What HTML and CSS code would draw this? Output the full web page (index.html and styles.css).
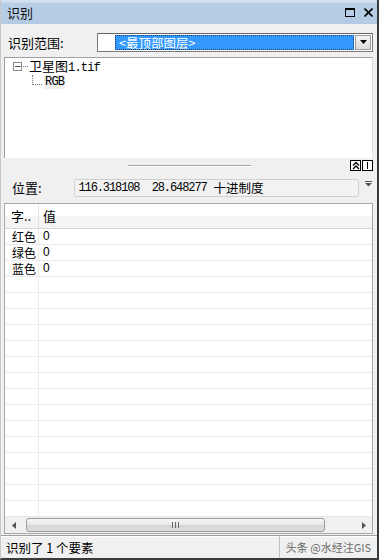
FILE: index.html
```html
<!DOCTYPE html>
<html lang="zh">
<head>
<meta charset="utf-8">
<link rel="stylesheet" href="styles.css">
</head>
<body>
<div class="window">
  <div class="titlebar">
    <span class="title">识别</span>
    <div class="title-icons">
      <span class="ico-max"></span>
      <svg class="ico-close" width="9" height="9" viewBox="0 0 9 9"><path d="M0.5 0.5L8.5 8.5M8.5 0.5L0.5 8.5" stroke="#000" stroke-width="1.6"/></svg>
    </div>
  </div>

  <div class="scope-row">
    <span class="scope-label">识别范围:</span>
    <div class="combo">
      <span class="combo-blank"></span>
      <span class="combo-sel">&lt;最顶部图层&gt;</span>
      <span class="combo-btn"><svg width="7" height="4" viewBox="0 0 7 4"><path d="M0 0H7L3.5 4Z" fill="#000"/></svg></span>
    </div>
  </div>

  <div class="tree">
    <div class="tree-node">
      <span class="expander">−</span><span class="dots-h"></span><span class="node-text">卫星图<span class="mono">1.tif</span></span>
    </div>
    <div class="tree-child">
      <span class="elbow"></span><span class="child-text mono">RGB</span>
    </div>
  </div>

  <div class="splitter">
    <span class="split-line"></span>
    <div class="split-btns">
      <span class="sbtn"><svg width="8" height="9" viewBox="0 0 8 9"><path d="M1 4.5L4 1.5L7 4.5M1 8L4 5L7 8" fill="none" stroke="#000" stroke-width="1.3"/></svg></span>
      <span class="sbtn"><span class="vbar"></span></span>
    </div>
  </div>

  <div class="pos-row">
    <span class="pos-label">位置:</span>
    <div class="pos-field"><span class="mono num">116.318108&nbsp;&nbsp;28.648277</span><span class="unit">十进制度</span></div>
    <span class="pos-drop"><svg width="7" height="6" viewBox="0 0 7 6"><path d="M0 0.5H7" stroke="#555" stroke-width="1"/><path d="M0 2H7L3.5 5.5Z" fill="#555"/></svg></span>
  </div>

  <div class="grid">
    <div class="grid-body">
      <div class="grow ghead"><span class="c1">字..</span><span class="c2">值</span></div>
      <div class="grow"><span class="c1">红色</span><span class="c2">0</span></div>
      <div class="grow"><span class="c1">绿色</span><span class="c2">0</span></div>
      <div class="grow"><span class="c1">蓝色</span><span class="c2">0</span></div>
      <div class="grow"><span class="c1"></span><span class="c2"></span></div>
      <div class="grow"><span class="c1"></span><span class="c2"></span></div>
      <div class="grow"><span class="c1"></span><span class="c2"></span></div>
      <div class="grow"><span class="c1"></span><span class="c2"></span></div>
      <div class="grow"><span class="c1"></span><span class="c2"></span></div>
      <div class="grow"><span class="c1"></span><span class="c2"></span></div>
      <div class="grow"><span class="c1"></span><span class="c2"></span></div>
      <div class="grow"><span class="c1"></span><span class="c2"></span></div>
      <div class="grow"><span class="c1"></span><span class="c2"></span></div>
      <div class="grow"><span class="c1"></span><span class="c2"></span></div>
      <div class="grow"><span class="c1"></span><span class="c2"></span></div>
      <div class="grow"><span class="c1"></span><span class="c2"></span></div>
      <div class="grow"><span class="c1"></span><span class="c2"></span></div>
      <div class="grow"><span class="c1"></span><span class="c2"></span></div>
      <div class="grow"><span class="c1"></span><span class="c2"></span></div>
      <div class="grow"><span class="c1"></span><span class="c2"></span></div>
    </div>
    <div class="hscroll">
      <span class="arrow"><svg width="4" height="7" viewBox="0 0 4 7"><path d="M4 0V7L0 3.5Z" fill="#555"/></svg></span>
      <div class="track">
        <div class="thumb"><span class="grip"></span></div>
      </div>
      <span class="arrow"><svg width="4" height="7" viewBox="0 0 4 7"><path d="M0 0V7L4 3.5Z" fill="#555"/></svg></span>
    </div>
  </div>

  <div class="status">
    <span class="status-text">识别了 1 个要素</span>
    <span class="status-mark">头条 @水经注GIS</span>
  </div>
</div>
</body>
</html>
```
FILE: styles.css
```css
* { box-sizing: border-box; }
html, body { margin: 0; padding: 0; }
body {
  width: 379px;
  height: 560px;
  overflow: hidden;
  background: #fff;
  font-family: "Noto Sans CJK SC", "Noto Sans", sans-serif;
  font-size: 12px;
  color: #000;
}
.window {
  width: 379px;
  height: 560px;
  background: #f0f0f0;
  border-right: 2px solid #3a3a3a;
  border-bottom: 2px solid #3a3a3a;
  border-left: 1px solid #c8c8c8;
  display: flex;
  flex-direction: column;
}
.mono { font-family: "Liberation Mono", "DejaVu Sans Mono", monospace; }

.titlebar {
  height: 24px;
  flex: none;
  background: linear-gradient(#d2e1f1 0, #d2e1f1 2px, #b9cfe7 3px, #b4cbe5 100%);
  display: flex;
  align-items: center;
  justify-content: space-between;
  padding: 0 4px 0 6px;
}
.title { font-size: 13px; line-height: 1; color: #101010; }
.title-icons { display: flex; align-items: center; gap: 9px; }
.ico-max { width: 10px; height: 9px; border: 1.5px solid #000; border-top-width: 2px; display: block; }
.ico-close { display: block; }

.scope-row {
  height: 33px;
  flex: none;
  display: flex;
  align-items: center;
  padding: 3px 4px 0 7px;
}
.scope-label { width: 89px; font-size: 13px; }
.combo {
  flex: 1;
  height: 19px;
  display: flex;
  background: #fff;
  border: 1px solid #7a7a7a;
  border-top-color: #646464;
  padding: 1px;
}
.combo-blank { width: 16px; background: #fff; }
.combo-sel {
  flex: 1;
  background: #3399ff;
  color: #fff;
  font-size: 12.5px;
  line-height: 15px;
  padding-left: 4px;
  outline: 1px dotted #1a3a6a;
  outline-offset: -1px;
}
.combo-btn {
  width: 16px;
  background: linear-gradient(#f4f4f4, #dcdcdc);
  border: 1px solid #9a9a9a;
  margin-left: 1px;
  display: flex;
  align-items: center;
  justify-content: center;
}
.combo-btn svg { display: block; }

.tree {
  flex: none;
  height: 101px;
  margin: 0 4px 0 3px;
  background: #fff;
  border: 1px solid #a0a0a0;
  border-right-color: #e0e0e0;
  border-bottom: none;
  padding: 1px 0 0 8px;
}
.tree-node { display: flex; align-items: center; height: 15px; }
.expander {
  width: 9px; height: 9px;
  border: 1px solid #8a8a8a;
  font-size: 9px; line-height: 6px;
  text-align: center;
  color: #222;
  font-family: "DejaVu Sans", sans-serif;
  display: block;
}
.dots-h { width: 5px; border-top: 1px dotted #808080; margin: 0 1px; }
.node-text { font-size: 13px; line-height: 15px; }
.node-text .mono { font-size: 12px; letter-spacing: -0.8px; }
.tree-child { display: flex; align-items: flex-end; height: 15px; padding-left: 19px; }
.elbow { width: 10px; height: 10px; border-left: 1px dotted #808080; border-bottom: 1px dotted #808080; margin-bottom: 4px; }
.child-text { font-size: 12px; line-height: 14px; background: #f0f0f0; padding: 0 1px; letter-spacing: -0.8px; margin-left: 2px; }

.splitter {
  flex: none;
  height: 15px;
  display: flex;
  align-items: center;
  padding: 0 4px 0 127px;
}
.split-line { width: 123px; height: 2px; border-top: 1px solid #a0a0a0; border-bottom: 1px solid #fff; }
.split-btns { margin-left: auto; display: flex; gap: 1px; }
.sbtn {
  width: 11px; height: 11px;
  border: 1px solid #000;
  background: #fff;
  display: flex; align-items: center; justify-content: center;
}
.sbtn svg { display: block; }
.vbar { width: 1px; height: 7px; background: #000; display: block; }

.pos-row {
  flex: none;
  height: 30px;
  display: flex;
  align-items: center;
  padding: 0 5px 1px 11px;
}
.pos-label { width: 63px; font-size: 13px; }
.pos-field {
  width: 287px;
  height: 18px;
  border: 1px solid #d0d0d0;
  border-radius: 2px;
  background: #f2f2f2;
  padding-left: 3px;
  display: flex;
  align-items: center;
  white-space: nowrap;
}
.num { font-size: 12px; letter-spacing: -1.1px; }
.unit { font-size: 12.5px; margin-left: 7px; }
.pos-drop { margin-left: 6px; align-self: flex-start; margin-top: 8px; display: block; }
.pos-drop svg { display: block; }

.grid {
  flex: none;
  height: 331px;
  margin: 0 4px 0 3px;
  border: 1px solid #a8a8a8;
  background: #fff;
  display: flex;
  flex-direction: column;
}
.grid-body { flex: 1; overflow: hidden; }
.grow {
  display: flex;
  height: 16px;
  border-bottom: 1px solid #ececec;
  font-size: 12px;
  line-height: 15px;
}
.grow .c1 { width: 34px; padding-left: 7px; border-right: 1px solid #ececec; white-space: nowrap; }
.grow .c2 { flex: 1; padding-left: 4px; font-family: "Liberation Sans", sans-serif; }
.ghead {
  height: 25px;
  background: linear-gradient(#ffffff 0, #ffffff 45%, #f4f4f4 55%, #f4f4f4 100%);
  border-bottom: 1px solid #d5d5d5;
  line-height: 24px;
  font-size: 13px;
}
.ghead .c1 { border-right-color: #e2e2e2; padding-left: 6px; }
.ghead .c2 { font-family: "Noto Sans CJK SC", sans-serif; }

.hscroll {
  flex: none;
  height: 17px;
  display: flex;
  align-items: center;
  background: #f0f0f0;
  border-top: 1px solid #e6e6e6;
}
.arrow { width: 17px; height: 16px; display: flex; align-items: center; justify-content: center; }
.arrow svg { display: block; }
.track { flex: 1; height: 16px; padding: 1px 30px 1px 4px; }
.thumb {
  height: 14px;
  border: 1px solid #9c9c9c;
  border-radius: 3px;
  background: linear-gradient(#f6f6f6, #e8e8e8 50%, #d6d6d6 51%, #dcdcdc);
  display: flex; align-items: center; justify-content: center;
}
.grip {
  width: 7px; height: 6px;
  background: repeating-linear-gradient(90deg, #6a6a6a 0, #6a6a6a 1px, transparent 1px, transparent 3px);
  display: block;
}

.status {
  flex: 1;
  display: flex;
  align-items: center;
  border-top: 1px solid #a0a0a0;
  box-shadow: inset 0 1px 0 #fff;
  margin-top: 1px;
  padding-left: 5px;
}
.status-text { font-size: 12.5px; flex: 1; }
.status-mark {
  height: 100%;
  border-left: 1px solid #c0c0c0;
  padding: 0 6px 0 6px;
  display: flex; align-items: center;
  color: #6a6a6a;
  font-size: 11px;
}
```
